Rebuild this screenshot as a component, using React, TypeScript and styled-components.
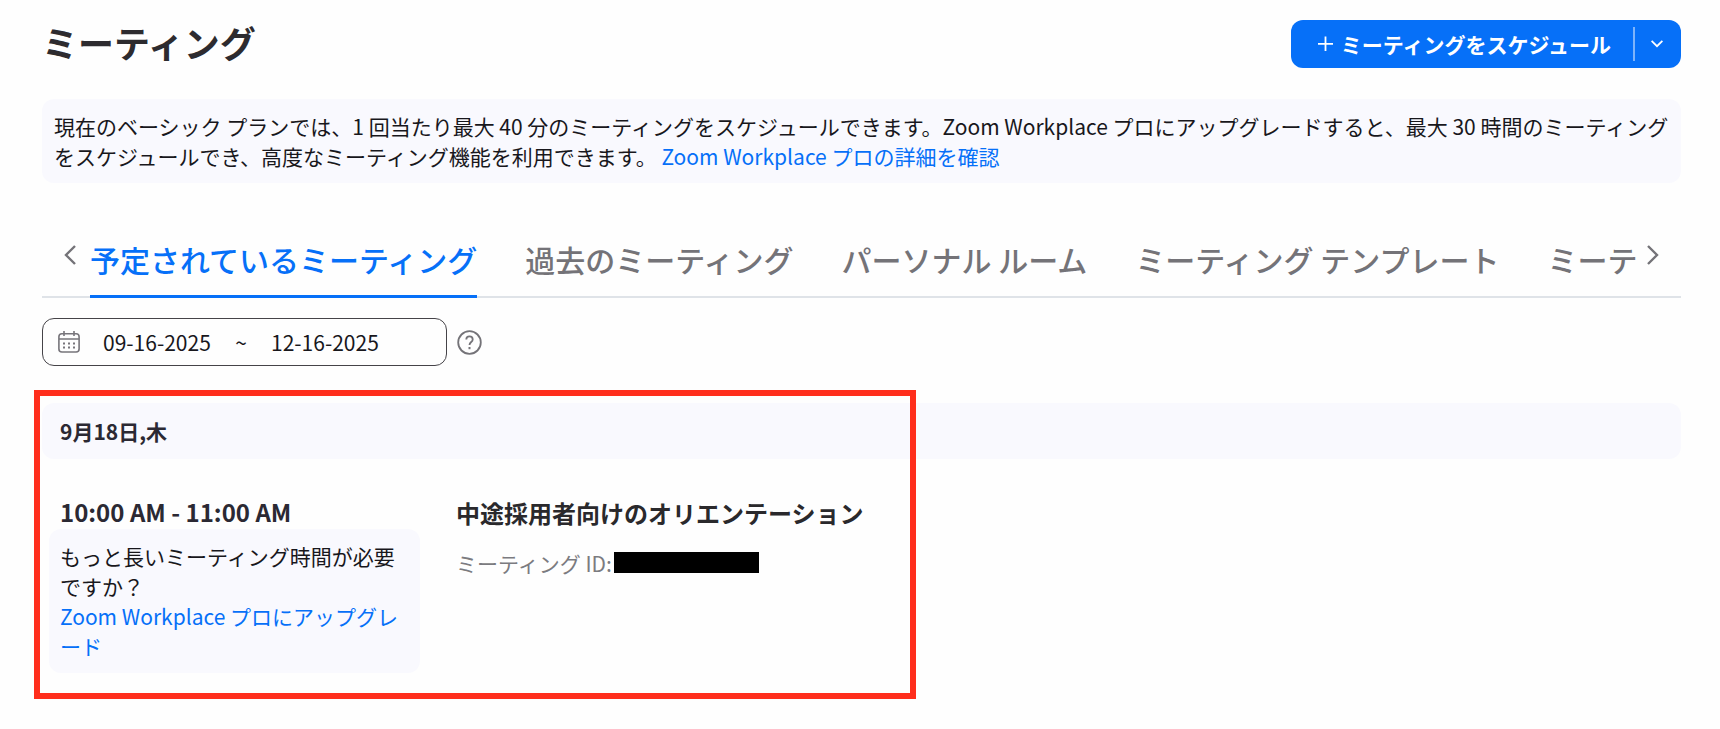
import React from 'react';
import styled, { createGlobalStyle } from 'styled-components';

const Global = createGlobalStyle`
  * { box-sizing: border-box; }
  body {
    margin: 0;
    background: #fefefe;
    color: #18171c;
    font-family: "Noto Sans CJK JP", "Noto Sans", sans-serif;
    font-size: 21px;
    line-height: 30px;
  }
  button, input { font: inherit; color: inherit; }
  button { cursor: pointer; }
  svg { display: block; flex: none; }
`;

const Page = styled.main`
  padding: 20px 39px 30px 42px;
`;

const Header = styled.header`
  display: flex;
  align-items: flex-start;
  justify-content: space-between;
`;

const Title = styled.h1`
  margin: 0;
  font-size: 36px;
  line-height: 44px;
  font-weight: 700;
  color: #2d2b2f;
`;

const SplitButton = styled.div`
  display: flex;
  align-items: center;
  height: 48px;
  border-radius: 12px;
  background: #0670f8;
  color: #fff;
`;

const ScheduleButton = styled.button`
  display: flex;
  align-items: center;
  gap: 8px;
  height: 34px;
  padding: 0 22px 0 27px;
  border: 0;
  border-right: 2px solid #7db3fb;
  background: none;
  font-weight: 700;
`;

const MenuButton = styled.button`
  display: flex;
  align-items: center;
  justify-content: center;
  width: 46px;
  height: 48px;
  padding: 0 2px 0 0;
  border: 0;
  background: none;
`;

const Notice = styled.p`
  margin: 31px 0 0;
  padding: 12px;
  border-radius: 12px;
  background: #f9f9fe;
`;

const Link = styled.a`
  color: #0670f8;
  text-decoration: none;
`;

const TabBar = styled.nav`
  display: flex;
  margin-top: 37px;
  border-bottom: 2px solid #dfe3e8;
`;

const TabArrow = styled.button<{ $side: 'left' | 'right' }>`
  display: flex;
  align-items: center;
  justify-content: ${p => (p.$side === 'left' ? 'flex-end' : 'flex-start')};
  flex: none;
  width: ${p => (p.$side === 'left' ? '48px' : '40px')};
  height: 50px;
  margin-top: 10px;
  padding: ${p => (p.$side === 'left' ? '0 14px 0 0' : '0 0 0 6px')};
  border: 0;
  background: none;
  color: #747378;
`;

const TabList = styled.div`
  display: flex;
  flex: 1;
  gap: 48px;
  min-width: 0;
  overflow: hidden;
  margin-bottom: -2px;
`;

const Tab = styled.button<{ $active?: boolean }>`
  flex: none;
  padding: 21px 0 18px;
  border: 0;
  border-bottom: 3px solid ${p => (p.$active ? '#0670f8' : 'transparent')};
  background: none;
  color: ${p => (p.$active ? '#0670f8' : '#747378')};
  font-size: 30px;
  line-height: 36px;
  font-weight: 500;
`;

const Filters = styled.div`
  display: flex;
  align-items: center;
  gap: 10px;
  margin-top: 20px;
`;

const DateRange = styled.div`
  display: flex;
  align-items: center;
  width: 405px;
  height: 48px;
  padding: 0 15px;
  border: 1px solid #454348;
  border-radius: 12px;
`;

const DateInput = styled.input`
  width: 112px;
  padding: 0;
  border: 0;
  outline: 0;
  background: none;

  &:first-of-type { margin-left: 23px; }
`;

const Tilde = styled.span`
  width: 56px;
  padding-right: 4px;
  text-align: center;
`;

const HelpButton = styled.button`
  padding: 0;
  border: 0;
  background: none;
  color: #747378;
`;

const Meetings = styled.section`
  position: relative;
  margin-top: 37px;
`;

const DayHeading = styled.h2`
  margin: 0;
  padding: 13px 18px;
  border-radius: 12px;
  background: #f9f9fe;
  color: #2b2933;
  font-size: 21px;
  font-weight: 700;
`;

const Meeting = styled.article`
  display: flex;
  gap: 36px;
  padding: 36px 7px 0;
`;

const TimeColumn = styled.div`
  width: 371px;
`;

const Time = styled.div`
  padding: 0 11px;
  color: #2b2933;
  font-size: 24px;
  line-height: 34px;
  font-weight: 700;
`;

const UpgradeHint = styled.p`
  margin: 0;
  padding: 12px 20px 12px 11px;
  border-radius: 12px;
  background: #f9f9fe;
`;

const Topic = styled.h3`
  margin: 0;
  color: #2a292c;
  font-size: 24px;
  line-height: 36px;
  font-weight: 700;
`;

const MeetingId = styled.p`
  display: flex;
  align-items: center;
  gap: 2px;
  margin: 17px 0 0;
  color: #7b7b80;
`;

const Redacted = styled.span`
  width: 145px;
  height: 21px;
  margin-bottom: 2px;
  background: #000;
`;

const Highlight = styled.div`
  position: absolute;
  top: -13px;
  left: -8px;
  width: 882px;
  height: 309px;
  border: 6px solid #ff2e1c;
  pointer-events: none;
`;

const PlusIcon = () => (
  <svg width="15" height="16" viewBox="0 0 15 16" fill="none" stroke="currentColor" strokeWidth="1.8" aria-hidden="true">
    <path d="M7.5 0.5v14.5M0 7.8h15" />
  </svg>
);

const ChevronDown = () => (
  <svg width="12" height="8" viewBox="0 0 12 8" fill="none" stroke="currentColor" strokeWidth="1.8" aria-hidden="true">
    <path d="M0.6 0.8L6 6.2l5.4-5.4" />
  </svg>
);

const SideChevron = ({ side }: { side: 'left' | 'right' }) => (
  <svg width="12" height="20" viewBox="0 0 12 20" fill="none" stroke="currentColor" strokeWidth="2.4" aria-hidden="true">
    <path d={side === 'left' ? 'M11 1L2 10l9 9' : 'M1 1l9 9-9 9'} />
  </svg>
);

const CalendarIcon = () => (
  <svg width="22" height="22" viewBox="0 0 22 22" fill="none" stroke="#77757b" strokeWidth="1.6" aria-hidden="true">
    <rect x="0.9" y="2.8" width="20.2" height="18.2" rx="3" />
    <path d="M1 8h20M6 0v5M16 0v5" />
    <path d="M5 12.4h2M10 12.4h2M15 12.4h2M5 16.6h2M10 16.6h2M15 16.6h2" strokeWidth="2" />
  </svg>
);

const HelpIcon = () => (
  <svg width="25" height="25" viewBox="0 0 25 25" fill="none" stroke="currentColor" strokeWidth="1.8" aria-hidden="true">
    <circle cx="12.5" cy="12.5" r="11.3" />
    <path d="M9.3 9.6c0-2 1.4-3.2 3.2-3.2s3.2 1.2 3.2 3c0 2.6-3.2 2.6-3.2 5.6" />
    <path d="M12.5 17v2.2" strokeWidth="2" />
  </svg>
);

const tabs = [
  '予定されているミーティング',
  '過去のミーティング',
  'パーソナル ルーム',
  'ミーティング テンプレート',
  'ミーテ',
];

export default function App() {
  return (
    <>
      <Global />
      <Page lang="ja">
        <Header>
          <Title>ミーティング</Title>
          <SplitButton>
            <ScheduleButton>
              <PlusIcon />
              ミーティングをスケジュール
            </ScheduleButton>
            <MenuButton aria-label="その他のオプション">
              <ChevronDown />
            </MenuButton>
          </SplitButton>
        </Header>

        <Notice>
          現在のベーシック プランでは、1 回当たり最大 40 分のミーティングをスケジュールできます。Zoom Workplace プロにアップグレードすると、最大 30 時間のミーティングをスケジュールでき、高度なミーティング機能を利用できます。{' '}
          <Link href="#pro">Zoom Workplace プロの詳細を確認</Link>
        </Notice>

        <TabBar>
          <TabArrow $side="left" aria-label="前のタブ">
            <SideChevron side="left" />
          </TabArrow>
          <TabList role="tablist">
            {tabs.map((label, i) => (
              <Tab key={label} role="tab" aria-selected={i === 0} $active={i === 0}>
                {label}
              </Tab>
            ))}
          </TabList>
          <TabArrow $side="right" aria-label="次のタブ">
            <SideChevron side="right" />
          </TabArrow>
        </TabBar>

        <Filters>
          <DateRange>
            <CalendarIcon />
            <DateInput type="text" aria-label="開始日" defaultValue="09-16-2025" />
            <Tilde>~</Tilde>
            <DateInput type="text" aria-label="終了日" defaultValue="12-16-2025" />
          </DateRange>
          <HelpButton aria-label="ヘルプ">
            <HelpIcon />
          </HelpButton>
        </Filters>

        <Meetings>
          <DayHeading>9月18日,木</DayHeading>
          <Meeting>
            <TimeColumn>
              <Time>10:00 AM - 11:00 AM</Time>
              <UpgradeHint>
                もっと長いミーティング時間が必要ですか？
                <br />
                <Link href="#upgrade">Zoom Workplace プロにアップグレード</Link>
              </UpgradeHint>
            </TimeColumn>
            <div>
              <Topic>中途採用者向けのオリエンテーション</Topic>
              <MeetingId>
                ミーティング ID:
                <Redacted />
              </MeetingId>
            </div>
          </Meeting>
          <Highlight />
        </Meetings>
      </Page>
    </>
  );
}
